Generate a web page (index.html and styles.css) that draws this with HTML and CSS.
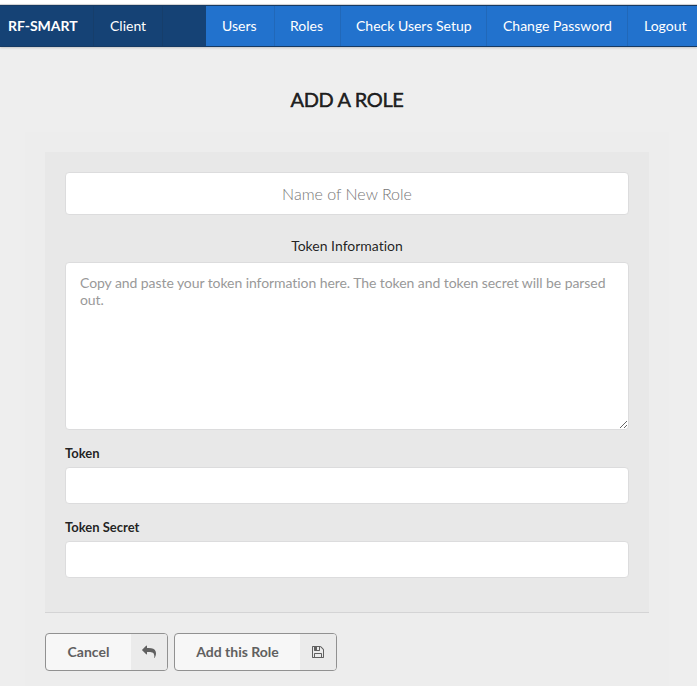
FILE: index.html
```html
<!DOCTYPE html>
<html lang="en">
<head>
<meta charset="utf-8">
<title>Add a Role</title>
<link rel="stylesheet" href="styles.css">
</head>
<body>
<nav class="menu">
  <div class="menu-left">
    <a class="item brand">RF-SMART</a>
    <a class="item client">Client</a>
  </div>
  <div class="menu-right">
    <a class="item users">Users</a>
    <a class="item roles">Roles</a>
    <a class="item check">Check Users Setup</a>
    <a class="item change">Change Password</a>
    <a class="item logout">Logout</a>
  </div>
</nav>
<main class="page">
  <h1 class="title">ADD A ROLE</h1>
  <form class="panel">
    <section class="segment">
      <input class="field name" type="text" placeholder="Name of New Role">
      <p class="caption">Token Information</p>
      <textarea class="field info" placeholder="Copy and paste your token information here. The token and token secret will be parsed out."></textarea>
      <label class="label" for="token">Token</label>
      <input class="field" id="token" type="text">
      <label class="label" for="secret">Token Secret</label>
      <input class="field" id="secret" type="text">
    </section>
    <div class="actions">
      <button class="button cancel" type="button">
        <span class="button-text">Cancel</span>
        <span class="button-icon"><svg width="14" height="14" viewBox="0 0 1792 1792"><path fill="currentColor" d="M1792 1120q0 166-127 451-3 7-10.500 24t-13.500 30-13 22q-12 17-28 17-15 0-23.500-10t-8.500-25q0-9 2.500-26.500t2.500-23.500q5-68 5-123 0-101-17.500-181t-48.500-138.500-80-101-105.500-69.500-133-42.500-154-21.500-175.500-6h-224v256q0 26-19 45t-45 19-45-19l-512-512q-19-19-19-45t19-45l512-512q19-19 45-19t45 19 19 45v256h224q713 0 875 403 53 134 53 333z"/></svg></span>
      </button>
      <button class="button add" type="button">
        <span class="button-text">Add this Role</span>
        <span class="button-icon"><svg width="14" height="14" viewBox="0 0 1792 1792"><path fill="currentColor" d="M512 1536h768v-384h-768v384zm896 0h128v-896q0-14-10-38.500t-20-34.500l-281-281q-10-10-34-20t-39-10v416q0 40-28 68t-68 28h-576q-40 0-68-28t-28-68v-416h-128v1280h128v-416q0-40 28-68t68-28h832q40 0 68 28t28 68v416zm-384-928v-320q0-13-9.500-22.500t-22.500-9.500h-192q-13 0-22.500 9.500t-9.500 22.500v320q0 13 9.500 22.500t22.500 9.500h192q13 0 22.500-9.500t9.500-22.500zm640 32v928q0 40-28 68t-68 28h-1344q-40 0-68-28t-28-68v-1344q0-40 28-68t68-28h928q40 0 88 20t76 48l280 280q28 28 48 76t20 88z"/></svg></span>
      </button>
    </div>
  </form>
</main>
</body>
</html>
```
FILE: styles.css
```css
* { box-sizing: border-box; }

html { background: #fff; }

body {
  margin: 0;
  padding-top: 4px;
  height: 686px;
  display: flex;
  flex-direction: column;
  font-family: Lato, sans-serif;
  font-size: 14px;
  font-variant-ligatures: none;
  color: rgba(0, 0, 0, .87);
}

.menu {
  display: flex;
  flex: none;
  height: 43px;
  border-top: 1px solid #d4d4d5;
  background: #154275;
  box-shadow: 0 1px 2px rgba(34, 36, 38, .2);
  position: relative;
}

.menu-left,
.menu-right {
  display: flex;
  border-top: 1px solid #163a63;
  border-bottom: 1px solid #163a63;
}

.menu-left { flex: none; width: 206px; }
.menu-right { flex: 1; min-width: 0; background: #2272cd; }

.item {
  display: flex;
  align-items: center;
  flex: none;
  padding-bottom: 2px;
  color: #fff;
  white-space: nowrap;
  border-right: 1px solid rgba(34, 36, 38, .12);
  padding-left: 16px;
}

.brand { width: 94px; padding-left: 8px; font-weight: 700; }
.client { width: 69px; }
.users { width: 69px; }
.roles { width: 66px; padding-left: 15px; }
.check { width: 146px; padding-left: 15px; }
.change { width: 141px; }
.logout { width: 70px; border-right: 0; }

.page {
  display: flex;
  flex-direction: column;
  flex: 1;
  background: #eee;
  padding: 40px 28px 0 25px;
}

.title {
  margin: 0 0 21px;
  text-align: center;
  font-size: 20px;
  line-height: 24px;
  font-weight: 400;
  letter-spacing: -.35px;
  -webkit-text-stroke: .5px currentColor;
}

.panel { flex: 1; background: #ededed; padding: 20px 20px 0; }

.segment {
  height: 461px;
  padding: 20px;
  background: #e8e8e8;
  border-bottom: 1px solid #d4d4d5;
}

.field {
  display: block;
  width: 100%;
  height: 37px;
  margin: 0;
  padding: 9px 14px;
  border: 1px solid #dcdcdd;
  border-radius: 4px;
  background: #fff;
  color: inherit;
  font: 14px/17px Lato, sans-serif;
  font-variant-ligatures: none;
  outline: 0;
}

.field::placeholder { color: #999; opacity: 1; }
.name { height: 43px; text-align: center; font-size: 16px; font-weight: 300; line-height: 20px; }
.name::placeholder { color: #777; }
.caption { margin: 22px 0 7px; text-align: center; line-height: 18px; }
.info { height: 168px; padding-top: 11px; resize: vertical; letter-spacing: -.07px; }

.label {
  display: block;
  margin: 15px 0 5px;
  font-size: 13px;
  line-height: 17px;
  font-weight: 700;
}

.actions { display: flex; gap: 6px; padding-top: 20px; }

.button {
  display: flex;
  height: 38px;
  padding: 0;
  border: 1px solid #919191;
  border-radius: 4px;
  background: #f7f7f7;
  overflow: hidden;
  color: #606060;
  font: 700 14px/36px Lato, sans-serif;
}

.button-text { flex: 1; text-align: center; }

.button-icon {
  display: flex;
  flex: none;
  align-items: center;
  justify-content: center;
  width: 36px;
  height: 36px;
  background: #ebebeb;
}

.cancel { width: 123px; }
.add { width: 163px; }
```
